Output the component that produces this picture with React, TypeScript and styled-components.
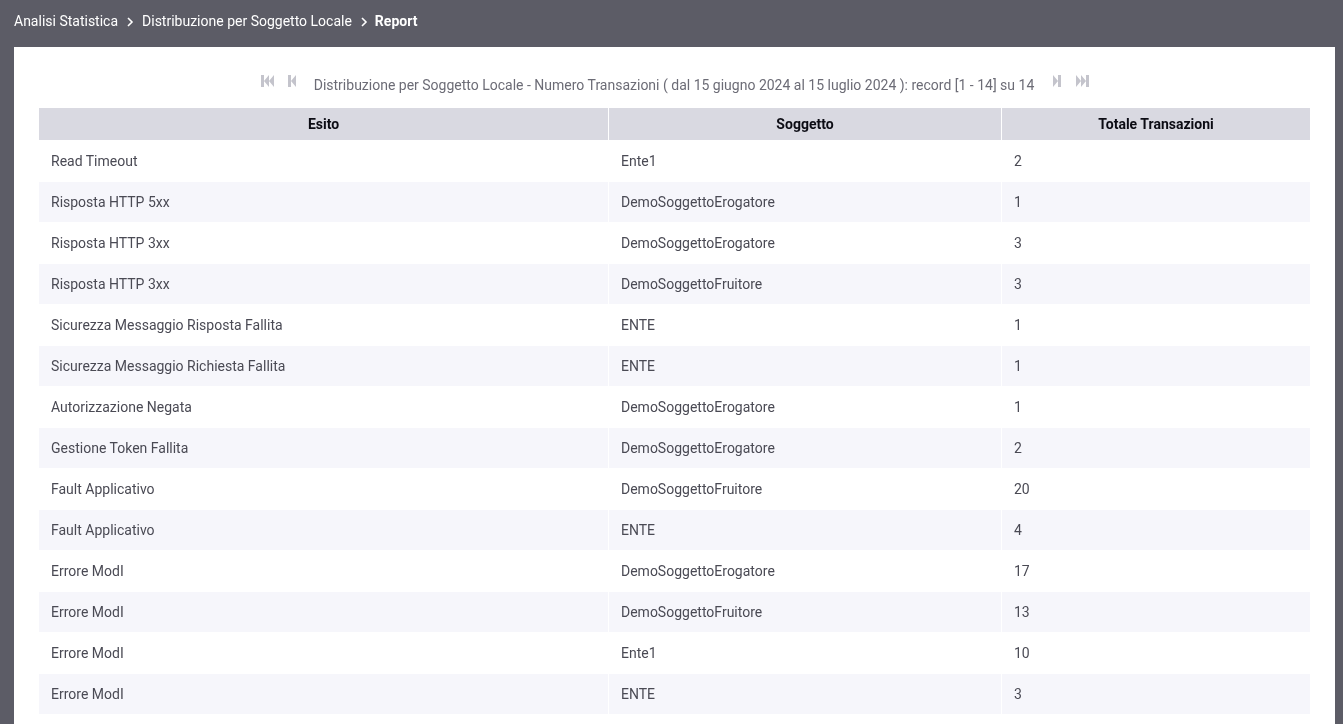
import React from "react";
import styled, { createGlobalStyle } from "styled-components";

const GlobalStyle = createGlobalStyle`
  html, body {
    margin: 0;
    padding: 0;
    height: 100%;
    overflow: hidden;
    background: #5c5c66;
    font-family: Roboto, "Liberation Sans", sans-serif;
  }
`;

const Page = styled.div`
  height: 724px;
  display: flex;
  flex-direction: column;
  background: #5c5c66;
  overflow: hidden;
  will-change: transform;
`;

const Breadcrumb = styled.nav`
  height: 47px;
  flex: none;
  display: flex;
  align-items: center;
  padding: 0 0 5px 14px;
  box-sizing: border-box;
  font-size: 14px;
  color: #ffffff;
`;

const Crumb = styled.span<{ $active?: boolean }>`
  font-weight: ${({ $active }) => ($active ? 700 : 400)};
  margin-left: ${({ $active }) => ($active ? -1 : 0)}px;
`;

const Chevron = styled.svg`
  width: 8px;
  height: 10px;
  margin: 1px 8px 0 8px;
`;

const Panel = styled.main`
  flex: 1;
  margin: 0 8px 0 14px;
  padding: 0 25px;
  background: #ffffff;
`;

const Pager = styled.div`
  height: 61px;
  display: flex;
  align-items: flex-start;
  justify-content: center;
  padding-top: 27px;
  box-sizing: border-box;
`;

const PagerText = styled.span`
  font-size: 14px;
  line-height: 22px;
  color: #6c6c76;
  margin: 0 19px 0 18px;
`;

const PagerIcon = styled.svg<{ $gap?: number }>`
  height: 12px;
  margin-top: 1px;
  margin-left: ${({ $gap }) => $gap ?? 0}px;
  fill: #c4c4cc;
  flex: none;
`;

const Table = styled.table`
  width: 1271px;
  table-layout: fixed;
  border-collapse: separate;
  border-spacing: 0;
  font-size: 14px;
`;

const HeadCell = styled.th`
  height: 32px;
  padding: 0;
  background: #d9d9e1;
  color: #0c0c14;
  font-weight: 700;
  text-align: center;
  border-left: 1px solid #ffffff;
  &:first-child {
    border-left: 0;
  }
`;

const Row = styled.tr`
  &:nth-child(even) td {
    background: #f6f6fb;
  }
`;

const Cell = styled.td`
  height: 40px;
  padding: 0 12px;
  color: #4a4a54;
  border-top: 1px solid #ffffff;
  border-left: 1px solid #ffffff;
  &:first-child {
    border-left: 0;
  }
`;

const rows: [string, string, number][] = [
  ["Read Timeout", "Ente1", 2],
  ["Risposta HTTP 5xx", "DemoSoggettoErogatore", 1],
  ["Risposta HTTP 3xx", "DemoSoggettoErogatore", 3],
  ["Risposta HTTP 3xx", "DemoSoggettoFruitore", 3],
  ["Sicurezza Messaggio Risposta Fallita", "ENTE", 1],
  ["Sicurezza Messaggio Richiesta Fallita", "ENTE", 1],
  ["Autorizzazione Negata", "DemoSoggettoErogatore", 1],
  ["Gestione Token Fallita", "DemoSoggettoErogatore", 2],
  ["Fault Applicativo", "DemoSoggettoFruitore", 20],
  ["Fault Applicativo", "ENTE", 4],
  ["Errore ModI", "DemoSoggettoErogatore", 17],
  ["Errore ModI", "DemoSoggettoFruitore", 13],
  ["Errore ModI", "Ente1", 10],
  ["Errore ModI", "ENTE", 3],
];

const Separator = () => (
  <Chevron viewBox="0 0 8 10" fill="none" stroke="#ffffff" strokeWidth="1.6">
    <path d="M2 1l4 4-4 4" />
  </Chevron>
);

const App: React.FC = () => (
  <Page>
    <GlobalStyle />
    <Breadcrumb>
      <Crumb>Analisi Statistica</Crumb>
      <Separator />
      <Crumb>Distribuzione per Soggetto Locale</Crumb>
      <Separator />
      <Crumb $active>Report</Crumb>
    </Breadcrumb>
    <Panel>
      <Pager>
        <PagerIcon width="14" viewBox="0 0 14 12">
          <path d="M1 0h3v12H1zM4 6l5-6v12zM9 6l5-6v12z" />
        </PagerIcon>
        <PagerIcon width="8" viewBox="0 0 8 12" $gap={14}>
          <path d="M0 0h3v12H0zM3 6l5-6v12z" />
        </PagerIcon>
        <PagerText>
          Distribuzione per Soggetto Locale - Numero Transazioni ( dal 15 giugno 2024 al 15 luglio 2024 ): record [1 - 14] su 14
        </PagerText>
        <PagerIcon width="8" viewBox="0 0 8 12">
          <path d="M0 0l5 6-5 6zM5 0h3v12H5z" />
        </PagerIcon>
        <PagerIcon width="14" viewBox="0 0 14 12" $gap={14}>
          <path d="M1 0l5 6-5 6zM6 0l5 6-5 6zM11 0h3v12h-3z" />
        </PagerIcon>
      </Pager>
      <Table>
        <colgroup>
          <col width="569" />
          <col width="393" />
          <col width="309" />
        </colgroup>
        <thead>
          <tr>
            <HeadCell>Esito</HeadCell>
            <HeadCell>Soggetto</HeadCell>
            <HeadCell>Totale Transazioni</HeadCell>
          </tr>
        </thead>
        <tbody>
          {rows.map(([esito, soggetto, totale], i) => (
            <Row key={i}>
              <Cell>{esito}</Cell>
              <Cell>{soggetto}</Cell>
              <Cell>{totale}</Cell>
            </Row>
          ))}
        </tbody>
      </Table>
    </Panel>
  </Page>
);

export default App;
